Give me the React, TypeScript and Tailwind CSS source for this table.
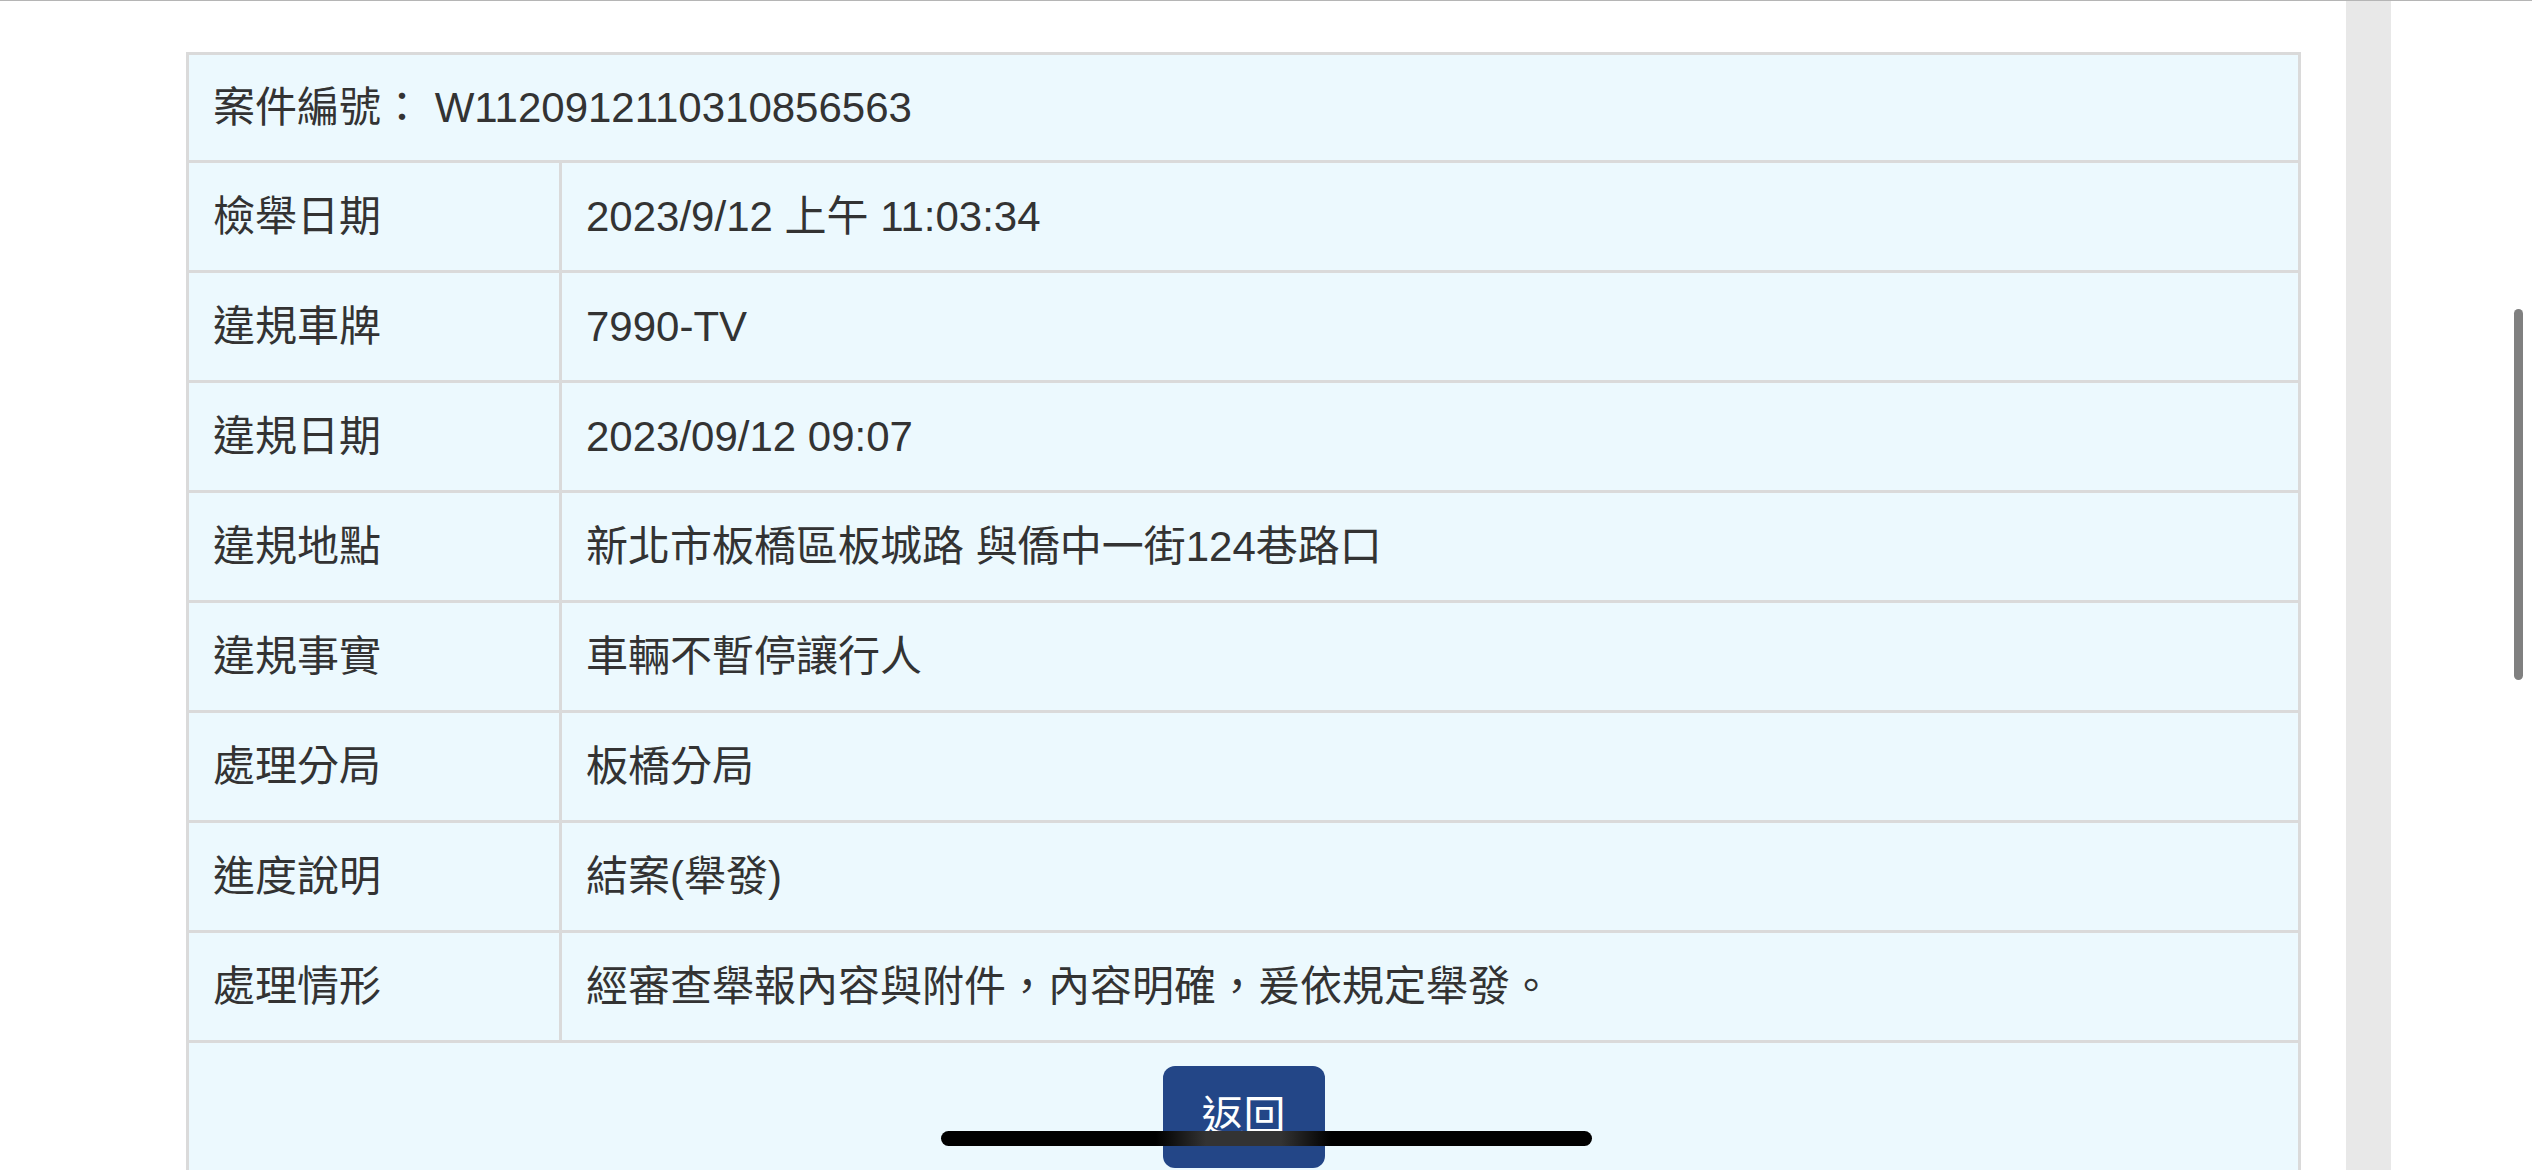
import React from "react";

const rows: [string, string][] = [
  ["檢舉日期", "2023/9/12 上午 11:03:34"],
  ["違規車牌", "7990-TV"],
  ["違規日期", "2023/09/12 09:07"],
  ["違規地點", "新北市板橋區板城路 與僑中一街124巷路口"],
  ["違規事實", "車輛不暫停讓行人"],
  ["處理分局", "板橋分局"],
  ["進度說明", "結案(舉發)"],
  ["處理情形", "經審查舉報內容與附件，內容明確，爰依規定舉發。"],
];

export default function App() {
  return (
    <div
      className="relative flex h-[1170px] w-[2532px] overflow-hidden border-t border-[#b5b5b5] bg-white text-[42px] leading-[50px] text-[#333333]"
      style={{ fontFamily: "'Liberation Sans', 'Noto Sans CJK TC', sans-serif" }}
    >
      <div className="w-[2301px] shrink-0 pl-[186px] pt-[51px]">
        <div className="border-x-[3px] border-t-[3px] border-[#dadada] bg-[#ecf9fe]">
          <div className="flex h-[108px] items-center border-b-[3px] border-[#dadada] pl-[24px]">
            <span>案件編號： W1120912110310856563</span>
          </div>
          {rows.map(([label, value]) => (
            <div key={label} className="flex h-[110px] border-b-[3px] border-[#dadada]">
              <div className="flex w-[373px] shrink-0 items-center border-r-[3px] border-[#dadada] pl-[24px]">
                {label}
              </div>
              <div className="flex flex-1 items-center pl-[24px]">{value}</div>
            </div>
          ))}
          <div className="flex h-[200px] justify-center pt-[23px]">
            <button className="flex h-[102px] w-[162px] items-center justify-center rounded-[12px] bg-[#234687] text-[42px] text-white">
              返回
            </button>
          </div>
        </div>
      </div>
      <div className="ml-[45px] w-[45px] shrink-0 bg-[#e8e8e8]" />
      <div className="relative flex-1">
        <div className="absolute left-[123px] top-[308px] h-[371px] w-[9px] rounded-full bg-[#808080]" />
      </div>
      <div className="absolute left-[941px] top-[1130px] h-[15px] w-[651px] rounded-full bg-[linear-gradient(to_right,#000_215px,#333_265px,#333_340px,#000_390px)]" />
    </div>
  );
}
